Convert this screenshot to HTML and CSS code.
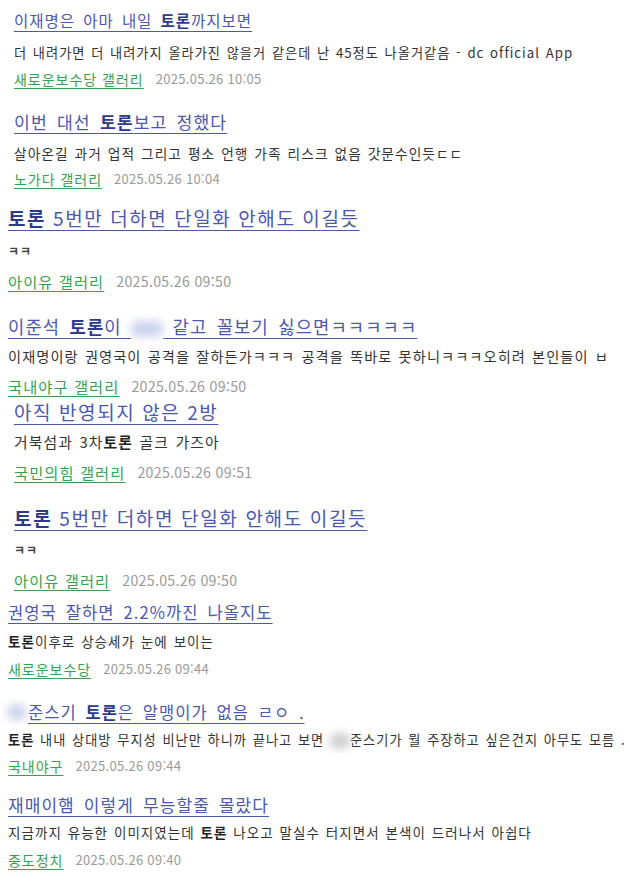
FILE: index.html
```html
<!DOCTYPE html>
<html lang="ko">
<head>
<meta charset="utf-8">
<link rel="stylesheet" href="styles.css">
</head>
<body>
<div class="list">
  <div class="post b1">
    <div class="title"><a>이재명은 아마 내일 <b>토론</b>까지보면</a></div>
    <div class="desc">더 내려가면 더 내려가지 올라가진 않을거 같은데 난 45정도 나올거같음 - dc official App</div>
    <div class="meta"><a class="gall">새로운보수당 갤러리</a><span class="date">2025.05.26 10:05</span></div>
  </div>
  <div class="post b2">
    <div class="title"><a>이번 대선 <b>토론</b>보고 정했다</a></div>
    <div class="desc">살아온길 과거 업적 그리고 평소 언행 가족 리스크 없음 갓문수인듯ㄷㄷ</div>
    <div class="meta"><a class="gall">노가다 갤러리</a><span class="date">2025.05.26 10:04</span></div>
  </div>
  <div class="post b3 big">
    <div class="title"><a><b>토론</b> 5번만 더하면 단일화 안해도 이길듯</a></div>
    <div class="desc small">ㅋㅋ</div>
    <div class="meta"><a class="gall">아이유 갤러리</a><span class="date">2025.05.26 09:50</span></div>
  </div>
  <div class="post b4">
    <div class="title"><a>이준석 <b>토론</b>이 <span class="blur w34"></span> 같고 꼴보기 싫으면ㅋㅋㅋㅋㅋ</a></div>
    <div class="desc">이재명이랑 권영국이 공격을 잘하든가ㅋㅋㅋ 공격을 똑바로 못하니ㅋㅋㅋ오히려 본인들이 ㅂ</div>
    <div class="meta"><a class="gall">국내야구 갤러리</a><span class="date">2025.05.26 09:50</span></div>
  </div>
  <div class="post b5 big">
    <div class="title"><a>아직 반영되지 않은 2방</a></div>
    <div class="desc">거북섬과 3차<b>토론</b> 골크 가즈아</div>
    <div class="meta"><a class="gall">국민의힘 갤러리</a><span class="date">2025.05.26 09:51</span></div>
  </div>
  <div class="post b6 big">
    <div class="title"><a><b>토론</b> 5번만 더하면 단일화 안해도 이길듯</a></div>
    <div class="desc small">ㅋㅋ</div>
    <div class="meta"><a class="gall">아이유 갤러리</a><span class="date">2025.05.26 09:50</span></div>
  </div>
  <div class="post b7">
    <div class="title"><a>권영국 잘하면 2.2%까진 나올지도</a></div>
    <div class="desc"><b>토론</b>이후로 상승세가 눈에 보이는</div>
    <div class="meta"><a class="gall">새로운보수당</a><span class="date">2025.05.26 09:44</span></div>
  </div>
  <div class="post b8">
    <div class="title"><span class="blur w18"></span><a>준스기 <b>토론</b>은 알맹이가 없음 ㄹㅇ .</a></div>
    <div class="desc"><b>토론</b> 내내 상대방 무지성 비난만 하니까 끝나고 보면 <span class="blur w20 gray"></span>준스기가 뭘 주장하고 싶은건지 아무도 모름 .</div>
    <div class="meta"><a class="gall">국내야구</a><span class="date">2025.05.26 09:44</span></div>
  </div>
  <div class="post b9">
    <div class="title"><a>재매이햄 이렇게 무능할줄 몰랐다</a></div>
    <div class="desc">지금까지 유능한 이미지였는데 <b>토론</b> 나오고 말실수 터지면서 본색이 드러나서 아쉽다</div>
    <div class="meta"><a class="gall">중도정치</a><span class="date">2025.05.26 09:40</span></div>
  </div>
</div>
</body>
</html>
```

FILE: styles.css
```css
html, body {
  margin: 0;
  padding: 0;
  background: #ffffff;
}
body {
  font-family: "Noto Sans CJK KR", "Noto Sans", sans-serif;
  width: 640px;
  overflow: hidden;
}
.list {
  display: flex;
  flex-direction: column;
}
.post {
  padding-left: 14px;
  display: flex;
  flex-direction: column;
}
.title {
  line-height: 26px;
  height: 26px;
  font-size: 16px;
  letter-spacing: 0.0625em;
  word-spacing: 0.19em;
  white-space: nowrap;
  display: flex;
  align-items: center;
}
.title a {
  color: #4a58b0;
  text-decoration: underline;
  text-decoration-thickness: 1px;
  text-underline-offset: 4px;
}
.title b {
  color: #2c3a8c;
  font-weight: 700;
}
.big .title {
  font-size: 19px;
  letter-spacing: 0.083em;
  word-spacing: 0;
}
.desc {
  line-height: 26px;
  height: 26px;
  font-size: 13px;
  letter-spacing: 0.077em;
  word-spacing: 0.077em;
  color: #333333;
  white-space: nowrap;
  overflow: hidden;
}
.desc b {
  color: #222222;
  font-weight: 700;
}
.desc.small {
  font-size: 12px;
  font-weight: 700;
  color: #444444;
}
.meta {
  line-height: 26px;
  height: 26px;
  white-space: nowrap;
  display: flex;
  gap: 12px;
}
.gall {
  font-size: 14px;
  letter-spacing: 0.07em;
  color: #33a34f;
  text-decoration: underline;
  text-decoration-thickness: 1px;
  text-underline-offset: 3px;
}
.date {
  font-size: 13px;
  color: #9a9a9a;
  letter-spacing: 0.3px;
}
.big .gall, .b4 .gall {
  font-size: 15.3px;
}
.big .date, .b4 .date {
  font-size: 14.2px;
}
.blur {
  display: inline-block;
  height: 16px;
  vertical-align: middle;
  background: #ccd3ee;
  filter: blur(4px);
  border-radius: 6px;
}
.blur.gray {
  background: #d0d0d0;
}
.w34 { width: 32px; }
.w18 { width: 18px; margin-right: 2px; }
.w20 { width: 20px; }

.b4, .b7, .b8, .b9, .b3 { padding-left: 8px; }

.b1 .title { font-size: 15.5px; }
.b2 .title { font-size: 17.2px; }
.b3 .title { font-size: 19px; }
.b4 .title { font-size: 17.7px; }
.b5 .title { font-size: 19px; }
.b6 .title { font-size: 19.1px; }
.b7 .title { font-size: 16.6px; }
.b8 .title { font-size: 16.5px; }
.b9 .title { font-size: 17px; }

.b1 .desc { font-size: 13.2px; }
.b2 .desc { font-size: 13.7px; }
.b4 .desc { font-size: 14.2px; }
.b5 .desc { font-size: 14.8px; }
.b7 .desc { font-size: 13.5px; }
.b8 .desc { font-size: 13.2px; }
.b9 .desc { font-size: 13.5px; }

.b1 { margin-top: 7px; }
.b1 .desc { margin-top: 7px; }
.b2 { margin-top: 17px; }
.b2 .desc { margin-top: 5px; }
.b3 { margin-top: 13px; }
.b3 .desc { margin-top: 7px; }
.b3 .meta { margin-top: 4px; }
.b4 { margin-top: 19px; }
.b4 .desc { margin-top: 4px; }
.b4 .meta { margin-top: 4px; }
.b5 { margin-top: 0px; }
.b5 .desc { margin-top: 4px; }
.b5 .meta { margin-top: 4px; }
.b6 { margin-top: 20px; }
.b6 .desc { margin-top: 6px; }
.b6 .meta { margin-top: 4px; }
.b7 { margin-top: 6px; }
.b7 .desc { margin-top: 3px; }
.b7 .meta { margin-top: 2px; }
.b8 { margin-top: 17px; }
.b8 .desc { margin-top: 2px; }
.b9 { margin-top: 13px; }
.b9 .desc { margin-top: 1px; }
.b9 .meta { margin-top: 2px; }
```
